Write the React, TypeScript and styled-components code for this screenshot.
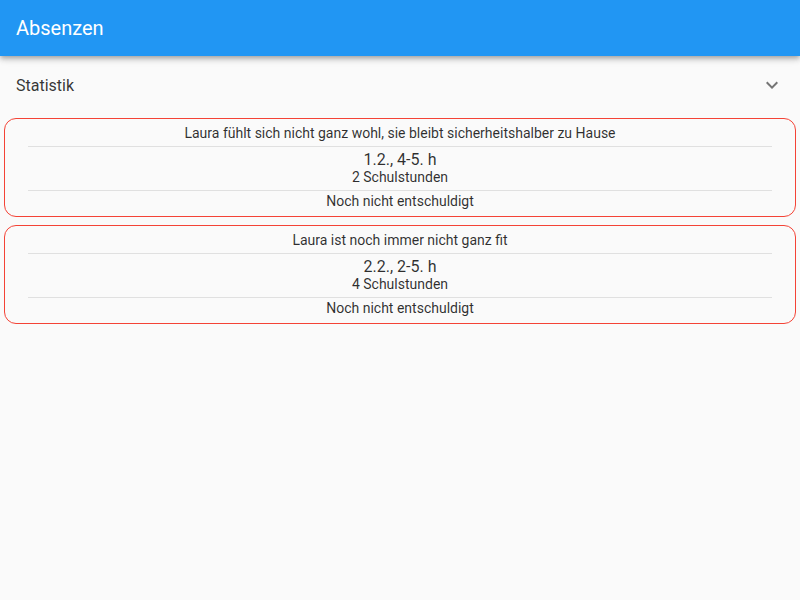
import styled, { createGlobalStyle } from "styled-components"

const GlobalStyle = createGlobalStyle`
  body {
    margin: 0;
    background: #fafafa;
    font-family: Roboto, "Noto Sans", sans-serif;
    color: rgba(0, 0, 0, 0.87);
  }
`

const Page = styled.div`
  min-height: 100vh;
  background: #fafafa;
`
const AppBar = styled.header`
  height: 56px;
  background: #2196f3;
  display: flex;
  align-items: center;
  padding: 0 16px;
  box-shadow: 0 2px 4px -1px rgba(0, 0, 0, 0.2), 0 4px 5px 0 rgba(0, 0, 0, 0.14),
    0 1px 10px 0 rgba(0, 0, 0, 0.12);
  position: relative;
  z-index: 1;
`
const Title = styled.h1`
  margin: 0;
  font-size: 20px;
  font-weight: 400;
  color: #fff;
`
const Tile = styled.div`
  height: 58px;
  display: flex;
  align-items: center;
  justify-content: space-between;
  padding: 0 16px;
  font-size: 16px;
  color: rgba(0, 0, 0, 0.8);
`
const Chevron = styled.svg`
  width: 24px;
  height: 24px;
  fill: #757575;
`
const List = styled.div`
  display: flex;
  flex-direction: column;
`
const Card = styled.div`
  margin: 4px;
  border: 1px solid #f44336;
  border-radius: 12px;
  padding: 4px 0 5px;
  text-align: center;
  display: flex;
  flex-direction: column;
`
const Line = styled.div<{ $size?: number; $lh: number }>`
  font-size: ${p => p.$size ?? 14}px;
  line-height: ${p => p.$lh}px;
  color: rgba(0, 0, 0, 0.82);
`
const Divider = styled.hr<{ $top: number; $bottom: number }>`
  border: none;
  height: 1px;
  background: #e0e0e0;
  margin: ${p => p.$top}px 23px ${p => p.$bottom}px;
`

interface IAbsence {
  reason: string
  date: string
  lessons: number
  status: string
}

const absences: IAbsence[] = [
  {
    reason: "Laura fühlt sich nicht ganz wohl, sie bleibt sicherheitshalber zu Hause",
    date: "1.2., 4-5. h",
    lessons: 2,
    status: "Noch nicht entschuldigt"
  },
  {
    reason: "Laura ist noch immer nicht ganz fit",
    date: "2.2., 2-5. h",
    lessons: 4,
    status: "Noch nicht entschuldigt"
  }
]

function App() {
  return (
    <Page>
      <GlobalStyle />
      <AppBar>
        <Title>Absenzen</Title>
      </AppBar>
      <Tile>
        <span>Statistik</span>
        <Chevron viewBox="0 0 24 24">
          <path d="M16.59 8.59L12 13.17 7.41 8.59 6 10l6 6 6-6z" />
        </Chevron>
      </Tile>
      <List>
        {absences.map((a, i) => (
          <Card key={i}>
            <Line $lh={21}>{a.reason}</Line>
            <Divider $top={2} $bottom={4} />
            <Line $size={16} $lh={18}>{a.date}</Line>
            <Line $lh={16}>{a.lessons} Schulstunden</Line>
            <Divider $top={5} $bottom={0} />
            <Line $lh={20}>{a.status}</Line>
          </Card>
        ))}
      </List>
    </Page>
  )
}

export default App
